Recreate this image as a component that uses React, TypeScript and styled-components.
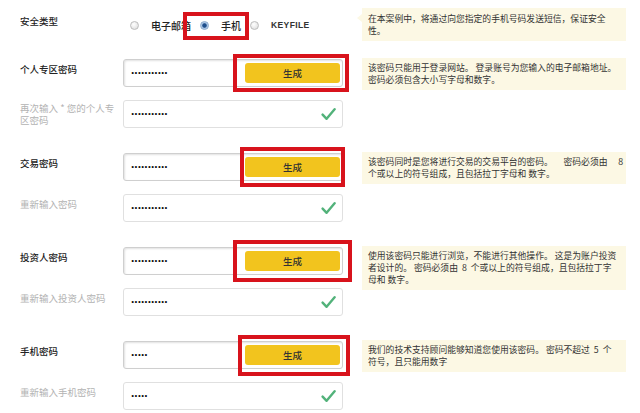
import React from 'react';
import styled, { createGlobalStyle } from 'styled-components';

const GlobalStyle = createGlobalStyle`
  html, body {
    margin: 0;
    padding: 0;
    background: #fff;
  }
  body {
    font-family: "Noto Sans CJK SC", "Liberation Sans", sans-serif;
    color: #333;
  }
`;

const Page = styled.div`
  width: 640px;
  height: 413px;
  overflow: hidden;
  box-sizing: border-box;
  padding: 8px 0 0 20px;
`;

// label | field | tip
const columns = '84px 220px 264px';

const HeaderRow = styled.div`
  display: grid;
  grid-template-columns: ${columns};
  column-gap: 19px;
  align-items: start;
`;

const Section = styled.div<{ $first?: boolean }>`
  display: grid;
  grid-template-columns: ${columns};
  grid-template-rows: 28px 28px;
  column-gap: 19px;
  row-gap: 13px;
  margin-top: ${({ $first }) => ($first ? '18px' : '25px')};
`;

const Label = styled.div<{ $muted?: boolean; $lines?: number }>`
  align-self: center;
  margin-right: -14px;
  padding-bottom: ${({ $lines }) => ($lines === 2 ? '0' : '9px')};
  font-size: 9.5px;
  line-height: 12px;
  font-weight: ${({ $muted }) => ($muted ? 400 : 500)};
  color: ${({ $muted }) => ($muted ? '#b3b3b3' : '#222')};
`;

const HeaderLabel = styled(Label)`
  align-self: start;
  margin-top: 7px;
  padding: 0;
`;

const Radios = styled.div`
  display: flex;
  align-items: center;
  gap: 9px;
  margin-top: 11px;
  padding-left: 7px;
  height: 12px;
`;

const RadioOption = styled.label`
  position: relative;
  display: flex;
  align-items: center;
  gap: 12px;
  font-size: 10px;
  font-weight: 500;
  color: #222;
  white-space: nowrap;
`;

const RadioDot = styled.span<{ $checked?: boolean }>`
  width: 9px;
  height: 9px;
  box-sizing: border-box;
  border-radius: 50%;
  border: 1px solid ${({ $checked }) => ($checked ? '#8aa9cc' : '#bdbdbd')};
  background: ${({ $checked }) =>
    $checked
      ? 'radial-gradient(circle, #1f4f8c 0 1.8px, #9fbde0 2.6px, #e6eef8 100%)'
      : 'radial-gradient(circle at 40% 35%, #ffffff, #d9d9d9)'};
`;

const Latin = styled.span`
  font-family: "Liberation Sans", sans-serif;
  font-size: 8.5px;
  font-weight: 700;
  letter-spacing: 0.4px;
  color: #333;
`;

const Tip = styled.div<{ $arrow?: boolean }>`
  position: relative;
  grid-column: 3;
  grid-row: 1 / span 2;
  align-self: start;
  margin-top: -1px;
  box-sizing: border-box;
  width: 264px;
  padding: 4px 4px 4px 6px;
  background: #fcf8e4;
  font-size: 8.8px;
  line-height: 12px;
  color: #333;

  &::before {
    content: '';
    display: ${({ $arrow }) => ($arrow ? 'block' : 'none')};
    position: absolute;
    left: -5px;
    top: 6px;
    border-style: solid;
    border-width: 4px 5px 4px 0;
    border-color: transparent #fcf8e4 transparent transparent;
  }
`;

const HeaderTip = styled(Tip)`
  margin-top: 0;
  grid-row: 1;
  padding-top: 5px;
`;

const TipLine = styled.div`
  white-space: pre;
`;

const Field = styled.div<{ $main?: boolean }>`
  display: flex;
  align-items: center;
  box-sizing: border-box;
  height: 28px;
  padding: 2px;
  background: #fff;
  border: 1px solid ${({ $main }) => ($main ? '#cfcfcf' : '#e0e0e0')};
  border-radius: 3px;
  box-shadow: ${({ $main }) => ($main ? 'inset 1px 1px 2px rgba(0, 0, 0, 0.12)' : 'none')};
`;

const TextInput = styled.input`
  flex: 1;
  min-width: 0;
  height: 100%;
  box-sizing: border-box;
  border: none;
  outline: none;
  background: transparent;
  padding: 0 0 6px 5px;
  font-family: "Liberation Sans", sans-serif;
  font-size: 12px;
  font-weight: 700;
  color: #111;
`;

const ButtonSlot = styled.span`
  position: relative;
  display: flex;
`;

const GenerateButton = styled.button`
  width: 95px;
  height: 20px;
  border: none;
  border-radius: 3px;
  background: #f2c41e;
  color: #333;
  font-family: "Noto Sans CJK SC", sans-serif;
  font-size: 9.5px;
  font-weight: 500;
  padding: 0;
  cursor: pointer;
`;

const Highlight = styled.span<{ $t: number; $r: number; $b: number; $l: number }>`
  position: absolute;
  top: ${({ $t }) => -$t}px;
  right: ${({ $r }) => -$r}px;
  bottom: ${({ $b }) => -$b}px;
  left: ${({ $l }) => -$l}px;
  border: 4px solid #d8131c;
  pointer-events: none;
`;

const Check = styled.svg`
  width: 15px;
  height: 14px;
  margin-right: 4px;
  flex: none;
`;

type Box = [number, number, number, number];

type PasswordSection = {
  label: string;
  confirm: string;
  confirmLines?: number;
  dots: string;
  tip: string[];
  box: Box;
};

const sections: PasswordSection[] = [
  {
    label: '个人专区密码',
    confirm: '再次输入 * 您的个人专区密码',
    confirmLines: 2,
    dots: '...........',
    tip: ['该密码只能用于登录网站。 登录账号为您输入的电子邮箱地址。', '密码必须包含大小写字母和数字。'],
    box: [9, 9, 9, 12],
  },
  {
    label: '交易密码',
    confirm: '重新输入密码',
    dots: '...........',
    tip: ['该密码同时是您将进行交易的交易平台的密码。 　密码必须由 　8', '个或以上的符号组成，且包括拉丁字母和 数字。'],
    box: [10, 5, 10, 5],
  },
  {
    label: '投资人密码',
    confirm: '重新输入投资人密码',
    dots: '...........',
    tip: [
      '使用该密码只能进行浏览，不能进行其他操作。 这是为账户投资',
      '者设计的。 密码必须由  8  个或以上的符号组成，且包括拉丁字',
      '母和 数字。',
    ],
    box: [11, 12, 11, 12],
  },
  {
    label: '手机密码',
    confirm: '重新输入手机密码',
    dots: '.....',
    tip: ['我们的技术支持顾问能够知道您使用该密码。 密码不超过  5  个', '符号，且只能用数字'],
    box: [10, 10, 11, 7],
  },
];

const CheckIcon = () => (
  <Check viewBox="0 0 15 14">
    <path d="M1.6 7.6 L5.6 11.8 L13.6 2.2" fill="none" stroke="#52b27a" strokeWidth="2.4" strokeLinecap="round" strokeLinejoin="round" />
  </Check>
);

const App = () => {
  return (
    <>
      <GlobalStyle />
      <Page>
        <HeaderRow>
          <HeaderLabel>安全类型</HeaderLabel>
          <Radios>
            <RadioOption>
              <RadioDot />
              电子邮箱
            </RadioOption>
            <RadioOption>
              <RadioDot $checked />
              手机
              <Highlight $t={6} $r={8} $b={7} $l={17} />
            </RadioOption>
            <RadioOption>
              <RadioDot />
              <Latin>KEYFILE</Latin>
            </RadioOption>
          </Radios>
          <HeaderTip $arrow>
            <TipLine>在本案例中，将通过向您指定的手机号码发送短信，保证安全</TipLine>
            <TipLine>性。</TipLine>
          </HeaderTip>
        </HeaderRow>

        {sections.map((s, i) => (
          <Section key={s.label} $first={i === 0}>
            <Label>{s.label}</Label>
            <Field $main>
              <TextInput readOnly value={s.dots} />
              <ButtonSlot>
                <GenerateButton>生成</GenerateButton>
                <Highlight $t={s.box[0]} $r={s.box[1]} $b={s.box[2]} $l={s.box[3]} />
              </ButtonSlot>
            </Field>
            <Tip>
              {s.tip.map((line) => (
                <TipLine key={line}>{line}</TipLine>
              ))}
            </Tip>
            <Label $muted $lines={s.confirmLines}>
              {s.confirm}
            </Label>
            <Field>
              <TextInput readOnly value={s.dots} />
              <CheckIcon />
            </Field>
          </Section>
        ))}
      </Page>
    </>
  );
};

export default App;
